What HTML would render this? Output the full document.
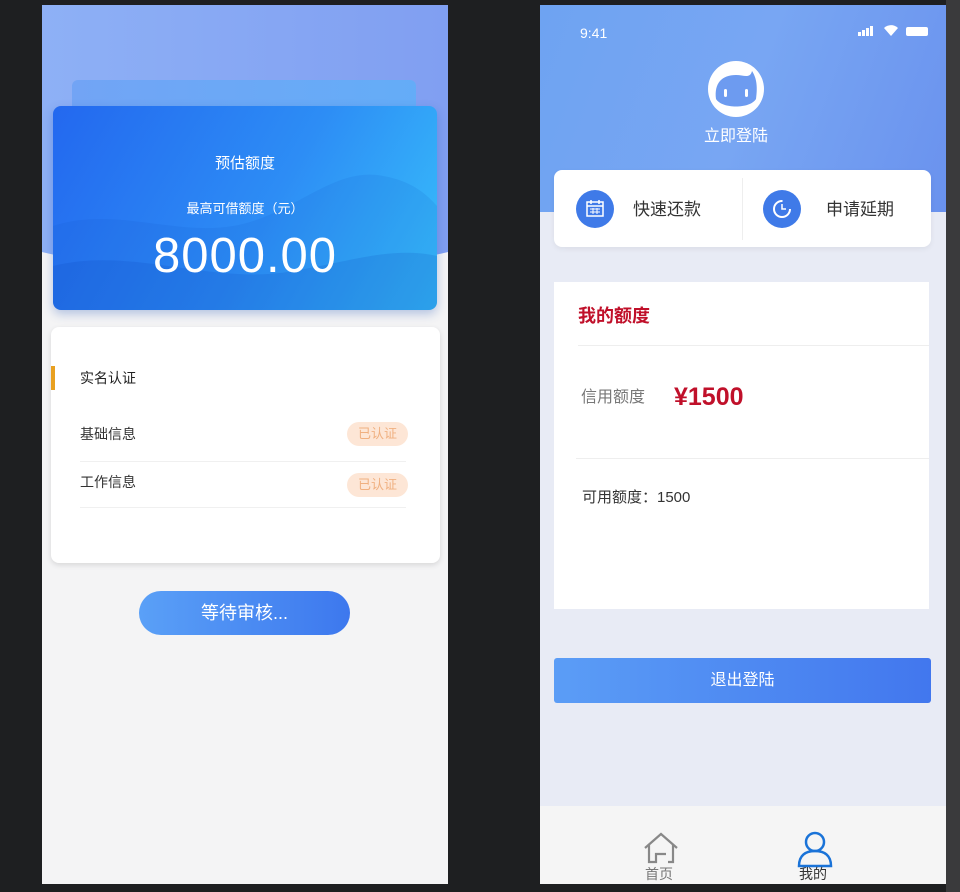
<!DOCTYPE html>
<html><head><meta charset="utf-8"><style>
*{margin:0;padding:0;box-sizing:border-box}
body{width:960px;height:892px;background:#1e1f21;position:relative;overflow:hidden;font-family:"Liberation Sans","Noto Sans CJK SC",sans-serif}
.abs{position:absolute}
.t{position:absolute;white-space:nowrap;line-height:1}
</style></head><body>
<div class="abs" style="left:946px;top:0;width:14px;height:892px;background:#3a3a3c"></div>
<!-- LEFT PHONE -->
<div class="abs" style="left:42px;top:5px;width:406px;height:879px;background:#f4f4f5;overflow:hidden">
  <div class="abs" style="left:-40px;top:-200px;width:486px;height:465px;border-radius:0 0 50% 50%/0 0 40px 40px;background:linear-gradient(90deg,#8fb2f6,#7f9df1)"></div>
  <div class="abs" style="left:30px;top:75px;width:344px;height:60px;border-radius:6px;background:linear-gradient(90deg,#6fa3f5,#61aef8);opacity:.9"></div>
  <div class="abs" style="left:11px;top:101px;width:384px;height:204px;border-radius:8px;background:linear-gradient(120deg,#2368ef 0%,#2d8df5 55%,#38c0fb 100%);box-shadow:0 4px 10px rgba(30,80,180,.3);overflow:hidden">
    <svg class="abs" style="left:0;top:0" width="384" height="204"><path d="M0 120 C60 100 120 130 180 120 C240 110 280 60 330 70 C360 75 375 90 384 100 L384 204 L0 204Z" fill="rgba(20,80,200,.12)"/><path d="M0 160 C80 140 160 180 240 165 C300 155 340 140 384 150 L384 204 L0 204Z" fill="rgba(10,60,180,.14)"/></svg>
    <div class="t" style="left:0;width:384px;text-align:center;top:50px;color:#fff;font-size:15px">预估额度</div>
    <div class="t" style="left:0;width:384px;text-align:center;top:96px;color:#fff;font-size:13px">最高可借额度（元）</div>
    <div class="t" style="left:0;width:384px;text-align:center;top:126px;color:#fff;font-size:49px;letter-spacing:1px">8000.00</div>
  </div>
  <div class="abs" style="left:9px;top:322px;width:389px;height:236px;background:#fff;border-radius:8px;box-shadow:0 2px 6px rgba(0,0,0,.12)">
    <div class="abs" style="left:0;top:39px;width:4px;height:24px;background:#e8a020"></div>
    <div class="t" style="left:29px;top:44px;font-size:14px;color:#222">实名认证</div>
    <div class="t" style="left:29px;top:100px;font-size:14px;color:#333">基础信息</div>
    <div class="abs" style="left:296px;top:95px;width:61px;height:24px;border-radius:12px;background:#fde6d6;color:#f0b080;font-size:13px;text-align:center;line-height:24px">已认证</div>
    <div class="abs" style="left:29px;top:134px;width:326px;height:1px;background:#f0f0f0"></div>
    <div class="t" style="left:29px;top:148px;font-size:14px;color:#333">工作信息</div>
    <div class="abs" style="left:296px;top:146px;width:61px;height:24px;border-radius:12px;background:#fde6d6;color:#f0b080;font-size:13px;text-align:center;line-height:24px">已认证</div>
    <div class="abs" style="left:29px;top:180px;width:326px;height:1px;background:#f0f0f0"></div>
  </div>
  <div class="abs" style="left:97px;top:586px;width:211px;height:44px;border-radius:22px;background:linear-gradient(90deg,#5aa0f7,#3d78ee);color:#fff;font-size:18px;text-align:center;line-height:44px">等待审核...</div>
</div>
<!-- RIGHT PHONE -->
<div class="abs" style="left:540px;top:5px;width:406px;height:879px;background:#e8ebf5;overflow:hidden">
  <div class="abs" style="left:0;top:0;width:406px;height:207px;background:linear-gradient(110deg,#6ea3f2,#78a6f3 50%,#6a92ee)"></div>
  <div class="t" style="left:40px;top:21px;color:#fff;font-size:14px">9:41</div>
  <svg class="abs" style="left:318px;top:20px" width="72" height="14"><rect x="0" y="7" width="3" height="4" fill="#fff"/><rect x="4" y="5" width="3" height="6" fill="#fff"/><rect x="8" y="3" width="3" height="8" fill="#fff"/><rect x="12" y="1" width="3" height="10" fill="#fff"/><path d="M26 3 A10 10 0 0 1 40 3 L33 11Z" fill="#fff"/><rect x="48" y="2" width="22" height="9" rx="2" fill="#fff"/></svg>
  <svg class="abs" style="left:168px;top:56px" width="56" height="56"><circle cx="28" cy="28" r="28" fill="#fff"/><path d="M8 38 C6 22 14 14 28 14 C36 14 42 18 44 10 C48 16 50 24 48 38 C42 48 14 48 8 38Z" fill="#6d9bf0"/><rect x="16" y="28" width="3" height="8" rx="1.5" fill="#fff"/><rect x="37" y="28" width="3" height="8" rx="1.5" fill="#fff"/></svg>
  <div class="t" style="left:0;width:392px;text-align:center;top:124px;color:#fff;font-size:16px">立即登陆</div>
  <div class="abs" style="left:14px;top:165px;width:377px;height:77px;background:#fff;border-radius:8px;box-shadow:0 2px 6px rgba(0,0,0,.06)">
    <div class="abs" style="left:188px;top:8px;width:1px;height:62px;background:#eee"></div>
    <svg class="abs" style="left:22px;top:20px" width="40" height="42"><circle cx="19" cy="19" r="19" fill="#3f7ae8"/><rect x="11" y="12" width="16" height="14" fill="none" stroke="#fff" stroke-width="1.5"/><line x1="11" y1="16" x2="27" y2="16" stroke="#fff" stroke-width="1.5"/><path d="M15 10v4M23 10v4" stroke="#fff" stroke-width="1.5"/><path d="M14 19h10M14 22h10M17 18v6M21 18v6" stroke="#fff" stroke-width="1"/></svg>
    <div class="t" style="left:79px;top:31px;font-size:17px;color:#333">快速还款</div>
    <svg class="abs" style="left:209px;top:20px" width="40" height="42"><circle cx="19" cy="19" r="19" fill="#3f7ae8"/><circle cx="19" cy="19" r="8" fill="none" stroke="#fff" stroke-width="2" stroke-dasharray="38 12"/><path d="M19 14v5h4" stroke="#fff" stroke-width="1.5" fill="none"/></svg>
    <div class="t" style="left:272px;top:31px;font-size:17px;color:#333">申请延期</div>
  </div>
  <div class="abs" style="left:14px;top:277px;width:375px;height:327px;background:#fff">
    <div class="t" style="left:24px;top:25px;font-size:18px;font-weight:bold;color:#c0102a">我的额度</div>
    <div class="abs" style="left:24px;top:63px;width:351px;height:1px;background:#eee"></div>
    <div class="t" style="left:27px;top:108px;font-size:16px;color:#777">信用额度</div>
    <div class="t" style="left:120px;top:103px;font-size:25px;font-weight:bold;color:#c0102a">¥1500</div>
    <div class="abs" style="left:22px;top:176px;width:353px;height:1px;background:#eee"></div>
    <div class="t" style="left:28px;top:208px;font-size:15px;color:#333">可用额度：1500</div>
  </div>
  <div class="abs" style="left:14px;top:653px;width:377px;height:45px;border-radius:3px;background:linear-gradient(90deg,#5b9df6,#4277ee);color:#fff;font-size:16px;text-align:center;line-height:45px">退出登陆</div>
  <div class="abs" style="left:0;top:801px;width:406px;height:78px;background:#f5f5f5"></div>
  <svg class="abs" style="left:102px;top:827px" width="38" height="34"><path d="M3 16 L19 2 L35 16" fill="none" stroke="#888" stroke-width="2.2"/><path d="M7 13 V30 H14 V22 H24 M31 13 V30 H26" fill="none" stroke="#888" stroke-width="2.2"/></svg>
  <div class="t" style="left:105px;top:862px;font-size:14px;color:#777">首页</div>
  <svg class="abs" style="left:256px;top:826px" width="38" height="38"><circle cx="19" cy="11" r="9" fill="none" stroke="#1a73d8" stroke-width="2.5"/><path d="M3 35 C3 24 10 20 19 20 C28 20 35 24 35 35Z" fill="none" stroke="#1a73d8" stroke-width="2.5"/></svg>
  <div class="t" style="left:259px;top:862px;font-size:14px;color:#333">我的</div>
</div>
</body></html>
